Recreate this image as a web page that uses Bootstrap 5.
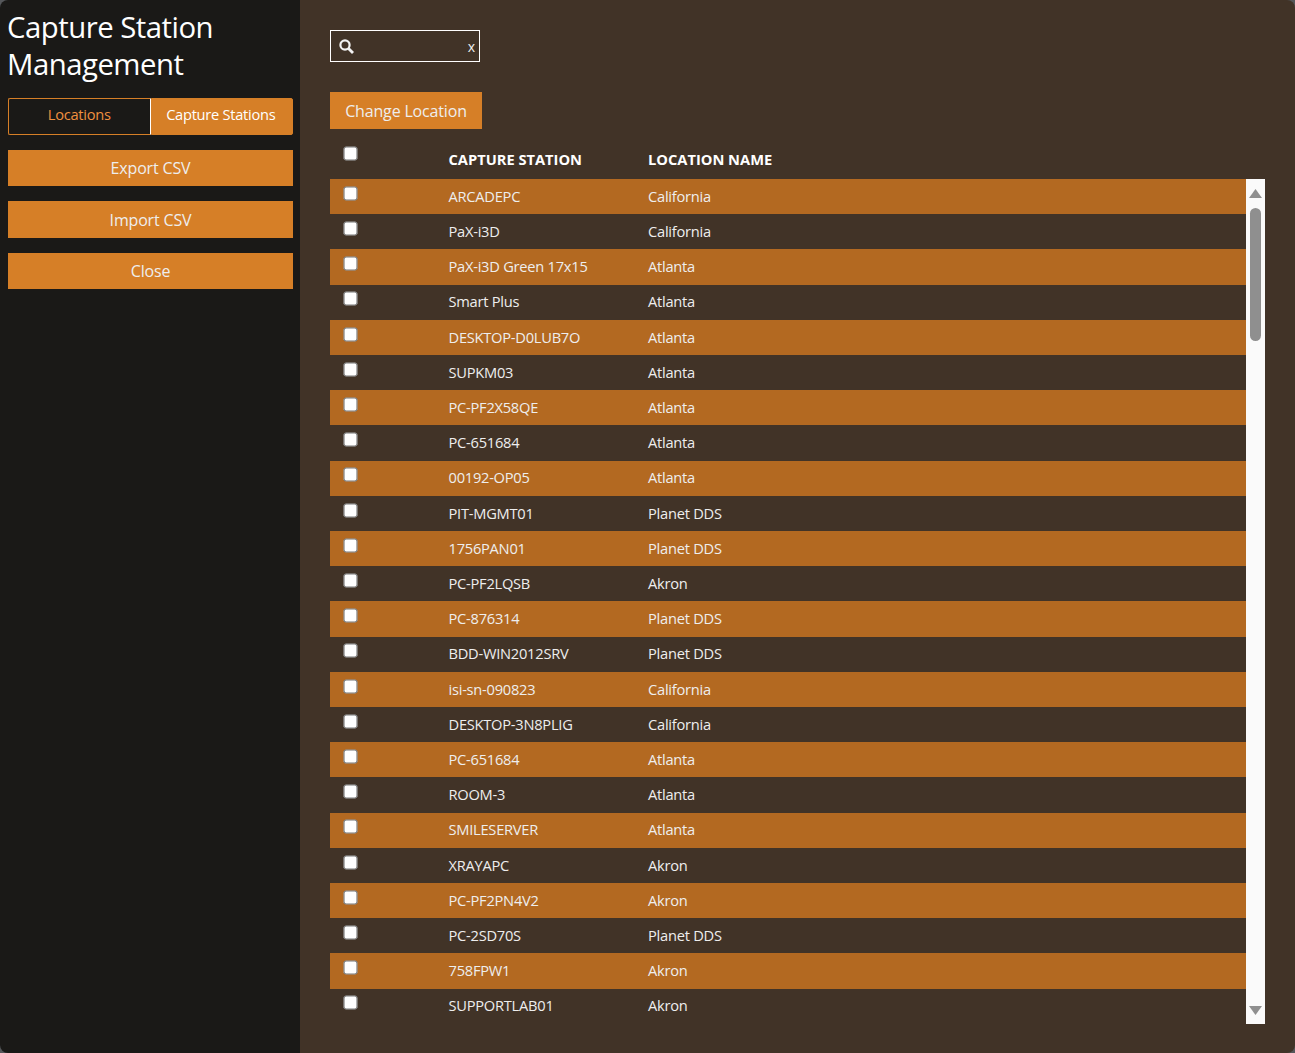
<!DOCTYPE html>
<html lang="en">
  <head>
    <meta charset="UTF-8" />
    <meta name="viewport" content="width=device-width, initial-scale=1.0" />
    <title>Capture Station Management</title>
    <link href="https://cdn.jsdelivr.net/npm/bootstrap@5.3.3/dist/css/bootstrap.min.css" rel="stylesheet" />
    <style>
      html, body {
        height: 100%;
      }
      body {
        background-color: #55575a;
        font-family: "Open Sans", "Liberation Sans", sans-serif;
        color: #eee;
        overflow: hidden;
      }
      .app-shell {
        height: 1053px;
        border-radius: 8px;
        overflow: hidden;
      }
      .side-panel {
        width: 300px;
        flex: none;
        background-color: #1a1917;
        padding: 8px 7px 0 8px;
      }
      .side-title {
        font-family: "Open Sans", sans-serif;
        font-size: 29.33px;
        line-height: 37px;
        font-weight: 400;
        letter-spacing: -0.5px;
        color: #fff;
        margin: 1px 0 15px -1px;
      }
      .tab-row {
        height: 37px;
        margin-bottom: 15px;
      }
      .tab-btn {
        flex: 1 1 50%;
        font-size: 14.67px;
        letter-spacing: -0.28px;
        padding: 0 0 5px;
        border-radius: 2px;
        color: #fff;
        background-color: #d67f27;
        border: 1px solid #d67f27;
      }
      .tab-btn.tab-on {
        background-color: #1a1917;
        color: #f0903f;
        border-right-color: #fff;
      }
      .tab-btn.tab-off {
        padding-right: 2px;
      }
      .side-btn, .change-btn {
        background-color: #d67f27;
        color: #eee;
        border: 0;
        border-radius: 0;
        font-size: 16px;
        letter-spacing: -0.17px;
        padding: 0;
      }
      .side-btn {
        height: 36.4px;
        margin-bottom: 15px;
      }
      .main-panel {
        background-color: #413327;
        padding: 30px 30px 0;
        min-width: 0;
      }
      .search-box {
        width: 150px;
        height: 32px;
        border: 1px solid #fff;
        padding: 0 4px 0 8px;
        margin-bottom: 30px;
      }
      .search-clear {
        font-size: 14px;
        color: #eee;
      }
      .change-btn {
        width: 152px;
        height: 37px;
        display: block;
      }
      .head-row, .data-row {
        display: flex;
        margin: 0;
        height: 35.21px;
        font-size: 14.67px;
        letter-spacing: -0.25px;
      }
      .head-row {
        height: 50px;
        width: 935px;
        color: #fff;
        font-weight: 700;
        letter-spacing: 0;
      }
      .data-row:nth-child(odd) {
        background-color: #b36921;
      }
      .check-col {
        width: 118.5px;
        flex: none;
        padding: 7.75px 0 0 14px;
      }
      .head-row .check-col {
        padding-top: 18px;
      }
      .check-col input {
        width: 13px;
        height: 13px;
        margin: 0;
        display: block;
        transform: scale(1.08);
      }
      .name-col {
        width: 199.5px;
        flex: none;
        line-height: 33.5px;
        padding-top: 0.8px;
      }
      .head-row .name-col, .head-row .loc-col {
        padding-top: 17px;
        line-height: 27px;
      }
      .loc-col {
        line-height: 33.5px;
        padding-top: 0.8px;
      }
      .list-wrap {
        width: 935px;
        height: 845px;
      }
      .list-rows {
        width: 916px;
        flex: none;
        overflow: hidden;
      }
      .fake-scroll {
        width: 19px;
        background-color: #fafafa;
        padding-top: 10px;
      }
      .scroll-thumb {
        width: 11px;
        height: 133px;
        margin: 10px 0 0 4px;
        background-color: #8f8f8f;
        border-radius: 6px;
      }
      .scroll-arrow {
        display: block;
        margin-left: 3px;
      }
      .scroll-arrow.arrow-down {
        margin-bottom: 9px;
      }
    </style>
  </head>
  <body>
    <div class="app-shell d-flex">
      <!-- Sidebar -->
      <div class="side-panel d-flex flex-column">
        <h1 class="side-title">Capture Station Management</h1>
        <div class="tab-row d-flex">
          <button type="button" class="btn tab-btn tab-on rounded-end-0">Locations</button>
          <button type="button" class="btn tab-btn tab-off rounded-start-0">Capture Stations</button>
        </div>
        <button type="button" class="btn side-btn w-100">Export CSV</button>
        <button type="button" class="btn side-btn w-100">Import CSV</button>
        <button type="button" class="btn side-btn w-100">Close</button>
      </div>

      <!-- Main -->
      <div class="main-panel flex-grow-1">
        <div class="search-box d-flex align-items-center justify-content-between">
          <svg width="15" height="15" viewBox="0 0 15 15" fill="none" stroke="#f2f2f2" stroke-width="2.2">
            <circle cx="6" cy="6" r="4.6" />
            <path d="M9.5 9.5L14 14" stroke-width="2.8" />
          </svg>
          <span class="search-clear">x</span>
        </div>
        <button type="button" class="btn change-btn">Change Location</button>
        <div class="head-row">
          <div class="check-col"><input type="checkbox" /></div>
          <div class="name-col">CAPTURE STATION</div>
          <div class="loc-col">LOCATION NAME</div>
        </div>
        <div class="list-wrap d-flex">
          <div class="list-rows" id="rows"></div>
          <div class="fake-scroll d-flex flex-column">
            <svg class="scroll-arrow" width="13" height="9" viewBox="0 0 13 9"><path d="M6.5 0L13 9H0Z" fill="#8f8f8f" /></svg>
            <div class="scroll-thumb"></div>
            <svg class="scroll-arrow arrow-down mt-auto" width="13" height="9" viewBox="0 0 13 9"><path d="M0 0H13L6.5 9Z" fill="#8f8f8f" /></svg>
          </div>
        </div>
      </div>
    </div>

    <script>
      const stations = [
        ["ARCADEPC", "California"],
        ["PaX-i3D", "California"],
        ["PaX-i3D Green 17x15", "Atlanta"],
        ["Smart Plus", "Atlanta"],
        ["DESKTOP-D0LUB7O", "Atlanta"],
        ["SUPKM03", "Atlanta"],
        ["PC-PF2X58QE", "Atlanta"],
        ["PC-651684", "Atlanta"],
        ["00192-OP05", "Atlanta"],
        ["PIT-MGMT01", "Planet DDS"],
        ["1756PAN01", "Planet DDS"],
        ["PC-PF2LQSB", "Akron"],
        ["PC-876314", "Planet DDS"],
        ["BDD-WIN2012SRV", "Planet DDS"],
        ["isi-sn-090823", "California"],
        ["DESKTOP-3N8PLIG", "California"],
        ["PC-651684", "Atlanta"],
        ["ROOM-3", "Atlanta"],
        ["SMILESERVER", "Atlanta"],
        ["XRAYAPC", "Akron"],
        ["PC-PF2PN4V2", "Akron"],
        ["PC-2SD70S", "Planet DDS"],
        ["758FPW1", "Akron"],
        ["SUPPORTLAB01", "Akron"],
      ];
      document.getElementById("rows").innerHTML = stations
        .map(
          (s) =>
            `<div class="data-row"><div class="check-col"><input type="checkbox" /></div><div class="name-col">${s[0]}</div><div class="loc-col">${s[1]}</div></div>`
        )
        .join("");
    </script>
    <script src="https://cdn.jsdelivr.net/npm/bootstrap@5.3.3/dist/js/bootstrap.bundle.min.js"></script>
  </body>
</html>
